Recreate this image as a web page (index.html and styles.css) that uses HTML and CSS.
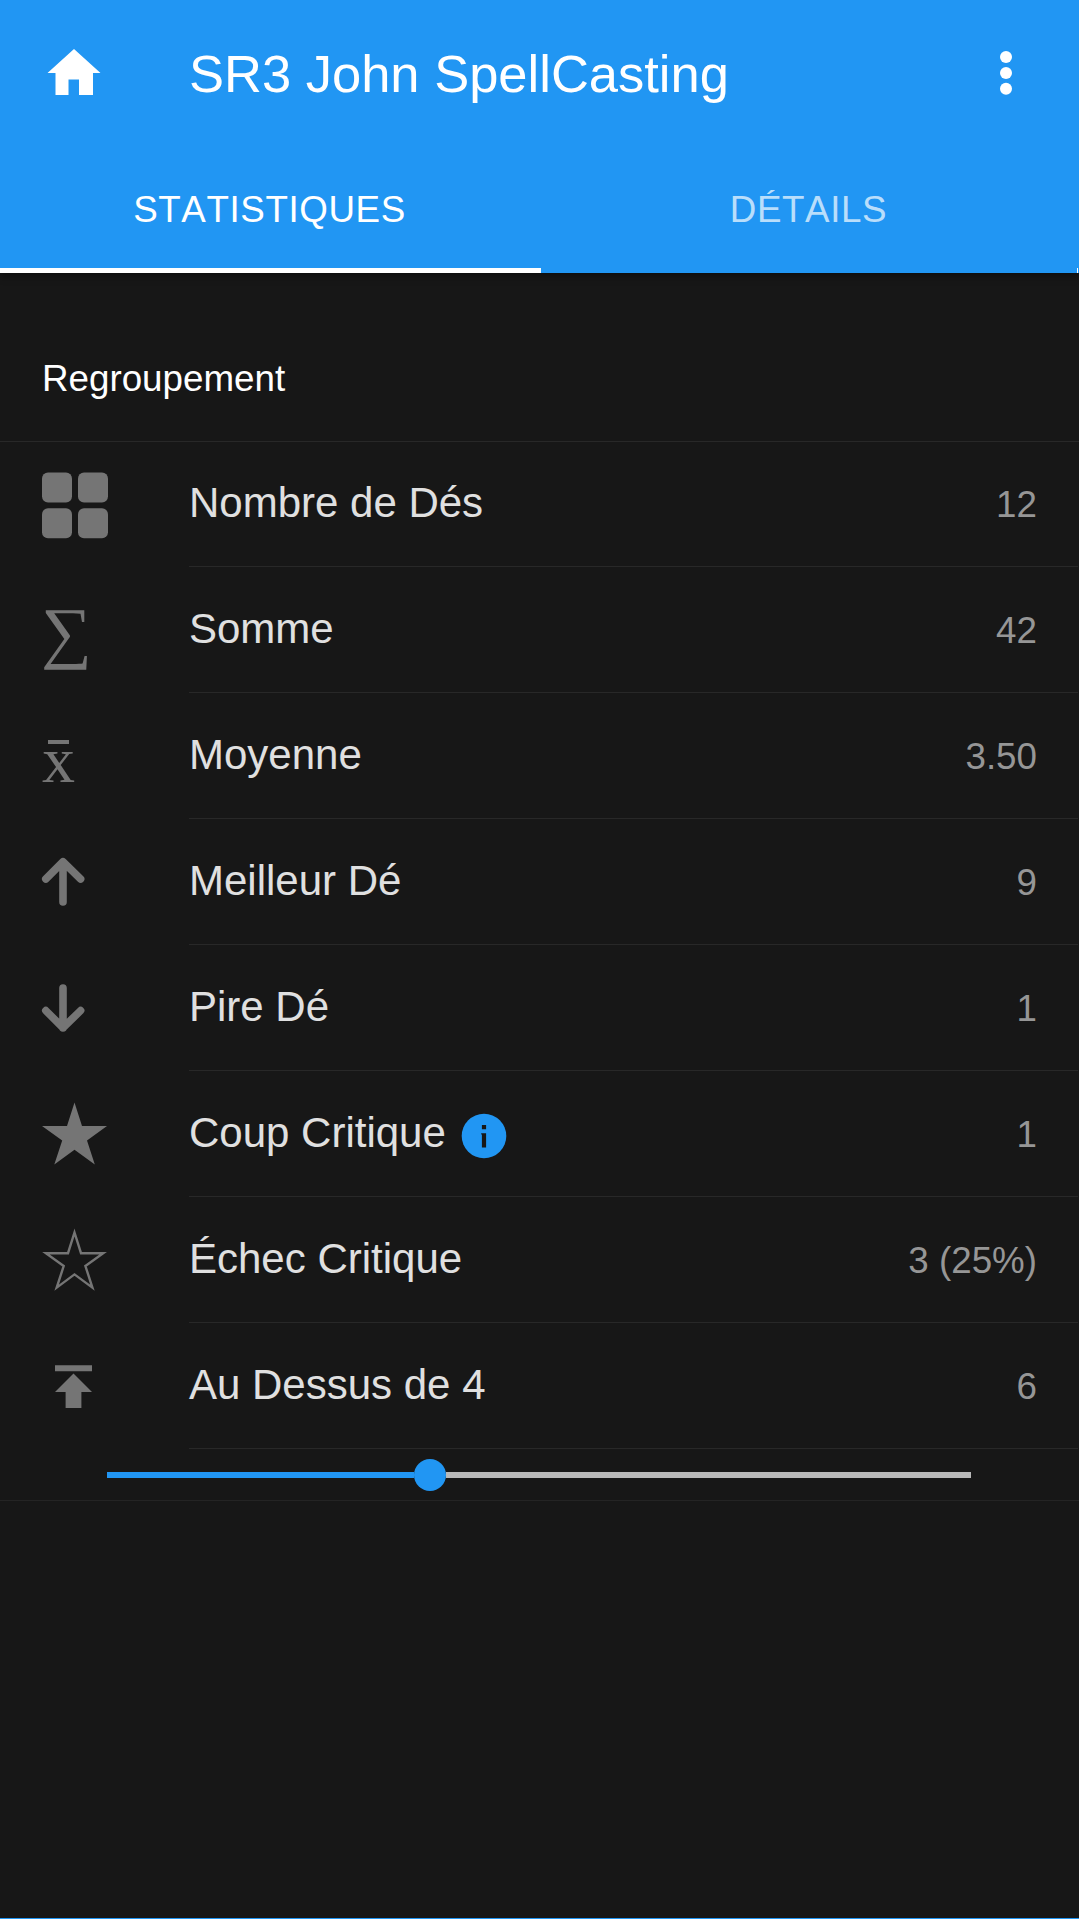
FILE: index.html
```html
<!DOCTYPE html>
<html lang="fr">
<head>
<meta charset="utf-8">
<title>SR3 John SpellCasting</title>
<link rel="stylesheet" href="styles.css">
</head>
<body>
<header class="appbar">
  <div class="navbar">
    <svg class="home" viewBox="0 0 54 46"><path d="M27 0 53.500 24H46V46H32V30.500H21.500V46H8.500V24H.500Z"/></svg>
    <h1 class="title">SR3 John SpellCasting</h1>
    <svg class="more" viewBox="0 0 14 46"><circle cx="7" cy="7" r="6"/><circle cx="7" cy="22.900" r="6"/><circle cx="7" cy="38.800" r="6"/></svg>
  </div>
  <nav class="tabs">
    <a class="tab active">STATISTIQUES</a>
    <a class="tab">DÉTAILS</a>
  </nav>
</header>
<main class="content">
  <h2 class="group-title">Regroupement</h2>
  <ul class="list">
    <li class="row">
      <span class="media"><svg class="icon" viewBox="0 0 147 125"><rect x="42" y="30.500" width="30" height="30" rx="6"/><rect x="78" y="30.500" width="30" height="30" rx="6"/><rect x="42" y="66.300" width="30" height="30" rx="6"/><rect x="78" y="66.300" width="30" height="30" rx="6"/></svg></span>
      <span class="inner"><span class="label">Nombre de Dés</span><span class="value">12</span></span>
    </li>
    <li class="row">
      <span class="media math sum">∑</span>
      <span class="inner"><span class="label">Somme</span><span class="value">42</span></span>
    </li>
    <li class="row">
      <span class="media math mean">x</span>
      <span class="inner"><span class="label">Moyenne</span><span class="value">3.50</span></span>
    </li>
    <li class="row">
      <span class="media"><svg class="icon arrow" viewBox="0 0 147 125"><path d="M63 83V43M45.800 60 63 42.800 80.600 60"/></svg></span>
      <span class="inner"><span class="label">Meilleur Dé</span><span class="value">9</span></span>
    </li>
    <li class="row">
      <span class="media"><svg class="icon arrow" viewBox="0 0 147 125"><path d="M63 43V83M45.800 65.600 63 82.800 80.600 65.600"/></svg></span>
      <span class="inner"><span class="label">Pire Dé</span><span class="value">1</span></span>
    </li>
    <li class="row">
      <span class="media"><svg class="icon" viewBox="0 0 147 125"><path d="M74.500 31.500 82 55H107L87 69.500 94.800 93.500 74.500 78.800 54.300 93.500 62.200 69.500 42 55H67Z"/></svg></span>
      <span class="inner"><span class="label">Coup Critique</span><svg class="info" viewBox="0 0 46 46"><circle cx="23" cy="23" r="22.300"/><path class="info-mark" d="M20.900 12H25.100V16.300H20.900ZM20.200 20.300H25.100V34.500H20.900V21.500H20.200Z"/></svg><span class="value">1</span></span>
    </li>
    <li class="row">
      <span class="media"><svg class="icon outline" viewBox="0 0 147 125"><path d="M74.500 35.500 81 56.200H103.200L85.400 69 92.400 90.600 74.500 77.400 56.700 90.600 63.700 69 45.900 56.200H68Z"/></svg></span>
      <span class="inner"><span class="label">Échec Critique</span><span class="value">3 (25%)</span></span>
    </li>
    <li class="row">
      <span class="media"><svg class="icon" viewBox="0 0 147 125"><path d="M55 42.300H92V48.300H55ZM73.500 50.500 92 69H81.400V85H65.600V69H55Z"/></svg></span>
      <span class="inner"><span class="label">Au Dessus de 4</span><span class="value">6</span></span>
    </li>
  </ul>
  <div class="slider-row">
    <div class="slider"><div class="fill"></div><div class="knob"></div><div class="rest"></div></div>
  </div>
</main>
<footer class="bottom-edge"></footer>
</body>
</html>
```
FILE: styles.css
```css
* { box-sizing: border-box; }
body {
  margin: 0;
  height: 1919px;
  display: flex;
  flex-direction: column;
  background: #171717;
  color: #fff;
  font-family: "Liberation Sans", Arial, sans-serif;
  overflow: hidden;
}
.appbar {
  height: 273px;
  background: #2196f3;
  box-shadow: 0 3px 8px rgba(0, 0, 0, .45);
}
.navbar {
  height: 147px;
  display: flex;
  align-items: center;
  padding: 0 66px 0 46px;
}
.home { width: 54px; height: 46px; margin: -3px 0 0 1px; fill: #fff; }
.title {
  margin: 0 0 0 88px;
  font-size: 52.5px;
  font-weight: 400;
  line-height: 60px;
  flex: 1;
}
.more { width: 14px; height: 46px; margin-top: -2px; fill: #fff; }
.tabs { height: 126px; display: flex; }
.tab {
  flex: 1;
  display: flex;
  align-items: center;
  justify-content: center;
  padding: 5px 2px 0 0;
  font-size: 36.75px;
  font-kerning: none;
  letter-spacing: .6px;
  color: rgba(255, 255, 255, .7);
  border-bottom: 5px solid transparent;
}
.tab.active { color: #fff; border-bottom-color: #fff; flex: 0 0 541px; }
.tab:last-child { border-right: 1px solid transparent; border-image: linear-gradient(to right, transparent 99.8%, #fff 99.8%) 0 0 5 0; }
.content { flex: 1; }
.group-title {
  margin: 0;
  height: 169px;
  padding: 85px 42px 0;
  font-size: 36.75px;
  font-weight: 400;
  line-height: 42px;
  border-bottom: 1px solid #282828;
}
.list { margin: 0; padding: 0; list-style: none; }
.row { height: 126px; display: flex; }
.row:first-child { height: 125px; }
.media { width: 189px; flex: none; }
.icon { display: block; width: 147px; height: 125px; fill: #757575; }
.icon.arrow { fill: none; stroke: #757575; stroke-width: 7.6; stroke-linecap: round; stroke-linejoin: round; }
.icon.outline { fill: none; stroke: #757575; stroke-width: 2.4; stroke-miterlimit: 10; }
.math {
  color: #757575;
  font-family: "Liberation Serif", "Times New Roman", serif;
}
.sum {
  padding-left: 39px;
  font-size: 68px;
  line-height: 130px;
  transform: scaleX(1.05);
  transform-origin: left;
}
.mean {
  position: relative;
  padding-left: 42px;
  font-size: 66px;
  line-height: 134px;
}
/* bar over the x of the mean symbol */
.mean::before {
  content: "";
  position: absolute;
  left: 48px;
  top: 47px;
  width: 21px;
  height: 4px;
  background: #757575;
}
.inner {
  flex: 1;
  display: flex;
  align-items: center;
  margin-right: 1px;
  padding-right: 41px;
  border-bottom: 1px solid #282828;
}
.label { padding-bottom: 2px; font-size: 42px; line-height: 48px; color: #e0e0e0; }
.info { width: 46px; height: 46px; margin: 5px 0 0 15px; fill: #2196f3; }
.info-mark { fill: #171717; }
.value { margin-left: auto; padding-top: 2px; font-size: 36.75px; line-height: 48px; color: #969696; }
.slider-row {
  height: 52px;
  padding: 1px 108px 0 107px;
  display: flex;
  align-items: center;
  border-bottom: 1px solid #242424;
}
.slider { flex: 1; display: flex; align-items: center; }
.fill { width: 307px; height: 6px; background: #2196f3; }
.knob { width: 32px; height: 32px; border-radius: 50%; background: #2196f3; }
.rest { flex: 1; height: 6px; background: #b9b9b9; }
.bottom-edge { height: 1px; background: #2196f3; }
```
